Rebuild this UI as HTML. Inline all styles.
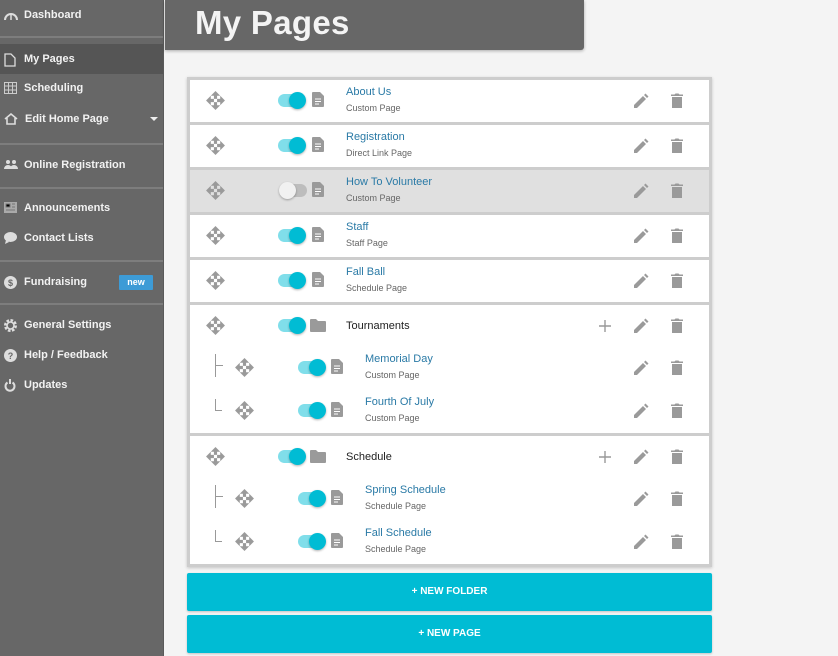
<!DOCTYPE html>
<html><head><meta charset="utf-8">
<style>
*{margin:0;padding:0;box-sizing:border-box}
body{width:838px;height:656px;background:#f4f4f4;font-family:"Liberation Sans",sans-serif;position:relative;overflow:hidden}
#side{position:absolute;left:0;top:0;width:164px;height:656px;background:#676767;border-right:1px solid #5a5a5a}
.si{position:absolute;left:0;width:163px;height:26px;color:#f2f2f2;font-size:11px;font-weight:bold;line-height:26px;padding-left:24px}
.si svg{position:absolute;left:4px;top:7px}
.sep{position:absolute;left:0;width:163px;height:2px;background:#7d7d7d}
#hdr{position:absolute;left:165px;top:0;width:419px;height:50px;background:#676767;border-radius:0 0 3px 0;box-shadow:0 1px 3px rgba(0,0,0,.3)}
#hdr h1{position:absolute;left:30px;top:4px;color:#f4f4f4;font-size:33px;font-weight:bold;letter-spacing:.3px}
#list{position:absolute;left:187px;top:77px;width:525px;height:490px;background:#cdcdcd;box-shadow:0 1px 3px rgba(0,0,0,.2)}
.row{position:absolute;left:3px;width:519px;background:#fff}
.it{position:absolute;height:43px;width:519px;left:0}
.mv{position:absolute;top:10px}
.tg{position:absolute;top:14px;width:26px;height:13px;border-radius:7px;background:#80deea}
.tg::after{content:"";position:absolute;right:-2px;top:-2px;width:17px;height:17px;border-radius:50%;background:#00bcd4;box-shadow:0 1px 2px rgba(0,0,0,.3)}
.tg.off{background:#bdbdbd}
.tg.off::after{right:auto;left:-2px;background:#f1f1f1}
.ic{position:absolute;top:12px}
.t1{position:absolute;top:6px;font-size:11px;color:#2a7aa6}
.t2{position:absolute;top:23px;font-size:9px;color:#666}
.fn{position:absolute;top:15px;font-size:11px;color:#222}
.tr{position:absolute;width:7px;border-left:1.5px solid #999;border-bottom:1.5px solid #999}
.btn{position:absolute;left:187px;width:525px;height:38px;background:#00bcd4;color:#fff;font-size:10px;font-weight:bold;text-align:center;line-height:38px;border-radius:2px;box-shadow:0 1px 2px rgba(0,0,0,.2)}
</style></head><body>
<svg width="0" height="0" style="position:absolute">
<defs>
<symbol id="mv" viewBox="0 0 20 20"><g fill="#9a9a9a"><path d="M10 1l4.5 4.5h-3v3h-3v-3h-3z"/><path d="M10 19l4.5-4.5h-3v-3h-3v3h-3z"/><path d="M1 10l4.5-4.5v3h3v3h-3v3z"/><path d="M19 10l-4.5-4.5v3h-3v3h3v3z"/></g></symbol>
<symbol id="doc" viewBox="0 0 12 15"><path d="M1 0h7l4 4v10a1 1 0 0 1-1 1H1a1 1 0 0 1-1-1V1a1 1 0 0 1 1-1z" fill="#9a9a9a"/><path d="M3 7h6M3 9.5h6M3 12h4" stroke="#fff" stroke-width="1"/></symbol>
<symbol id="fold" viewBox="0 0 16 13"><path d="M0 1a1 1 0 0 1 1-1h5l2 2h7a1 1 0 0 1 1 1v9a1 1 0 0 1-1 1H1a1 1 0 0 1-1-1z" fill="#9a9a9a"/></symbol>
<symbol id="pen" viewBox="0 0 16 16"><path d="M1 12v3h3l9-9-3-3zM11 2l3 3 1.5-1.5-3-3z" fill="#9a9a9a"/></symbol>
<symbol id="trash" viewBox="0 0 12 16"><path d="M1 4h10v11H1zM0 1.5h3.5L4.5 0.5h3l1 1H12v1.5H0z" fill="#9a9a9a"/></symbol>
<symbol id="plus" viewBox="0 0 12 12"><path d="M6 0v12M0 6h12" stroke="#999" stroke-width="1.4"/></symbol>
</defs></svg>

<div id="side">
<div class="si" style="top:2px"><svg width="14" height="12" viewBox="0 0 14 12"><path d="M1 11A6 6 0 0 1 13 11" fill="none" stroke="#ddd" stroke-width="2"/><path d="M7 11V6" stroke="#ddd" stroke-width="1.5"/></svg>Dashboard</div>
<div class="sep" style="top:36px"></div>
<div style="position:absolute;top:44px;left:0;width:163px;height:30px;background:#555"></div>
<div class="si" style="top:46px"><svg width="12" height="14" viewBox="0 0 12 14"><path d="M1 1h6l4 4v8H1z" fill="none" stroke="#ddd" stroke-width="1.3"/></svg>My Pages</div>
<div class="si" style="top:75px"><svg width="13" height="12" viewBox="0 0 13 12"><rect x="0.5" y="0.5" width="12" height="11" fill="none" stroke="#ccc"/><path d="M0 4h13M0 8h13M4.5 0v12M8.5 0v12" stroke="#ccc"/></svg>Scheduling</div>
<div class="si" style="top:106px;padding-left:25px"><svg width="14" height="12" viewBox="0 0 14 12"><path d="M1 6L7 1l6 5M3 5v6h8V5" fill="none" stroke="#ddd" stroke-width="1.6"/></svg>Edit Home Page<span style="position:absolute;left:150px;top:11px;border:4px solid transparent;border-top:4px solid #eee"></span></div>
<div class="sep" style="top:143px"></div>
<div class="si" style="top:152px"><svg width="14" height="10" viewBox="0 0 14 10"><circle cx="4" cy="3" r="2" fill="#ddd"/><circle cx="10" cy="3" r="2" fill="#ddd"/><path d="M0 10a4 4 0 0 1 8 0zM6 10a4 4 0 0 1 8 0z" fill="#ddd"/></svg>Online Registration</div>
<div class="sep" style="top:187px"></div>
<div class="si" style="top:195px"><svg width="13" height="11" viewBox="0 0 13 11"><rect width="13" height="11" fill="#aaa"/><path d="M2 2h4v3H2zM8 2h3M8 5h3M2 8h9" stroke="#777" stroke-width="1"/></svg>Announcements</div>
<div class="si" style="top:225px"><svg width="13" height="12" viewBox="0 0 13 12"><ellipse cx="6.5" cy="5" rx="6.5" ry="5" fill="#ddd"/><path d="M2 8l-1 4 4-2z" fill="#ddd"/></svg>Contact Lists</div>
<div class="sep" style="top:260px"></div>
<div class="si" style="top:269px"><svg width="13" height="13" viewBox="0 0 13 13"><circle cx="6.5" cy="6.5" r="6.5" fill="#ddd"/><text x="6.5" y="10" font-size="9" font-weight="bold" text-anchor="middle" fill="#676767" font-family="Liberation Sans">$</text></svg>Fundraising<span style="position:absolute;left:119px;top:6px;width:34px;height:15px;background:#3d9bd6;color:#fff;font-size:9px;line-height:15px;text-align:center;border-radius:1px">new</span></div>
<div class="sep" style="top:303px"></div>
<div class="si" style="top:312px"><svg width="13" height="13" viewBox="0 0 13 13"><circle cx="6.5" cy="6.5" r="5" fill="none" stroke="#ddd" stroke-width="3" stroke-dasharray="2.5 1.4"/><circle cx="6.5" cy="6.5" r="3.5" fill="none" stroke="#ddd" stroke-width="1.6"/></svg>General Settings</div>
<div class="si" style="top:342px"><svg width="13" height="13" viewBox="0 0 13 13"><circle cx="6.5" cy="6.5" r="6.5" fill="#ddd"/><text x="6.5" y="10" font-size="9" font-weight="bold" text-anchor="middle" fill="#676767" font-family="Liberation Sans">?</text></svg>Help / Feedback</div>
<div class="si" style="top:372px"><svg width="12" height="13" viewBox="0 0 12 13"><path d="M3.5 3.5a4.5 4.5 0 1 0 5 0" fill="none" stroke="#ddd" stroke-width="2"/><path d="M6 0v5" stroke="#ddd" stroke-width="2"/></svg>Updates</div>
</div>

<div id="hdr"><h1>My Pages</h1></div>

<div id="list">
<div class="row" style="top:3px;height:42px"><div class="it">
<svg class="mv" style="left:15px" width="21" height="21"><use href="#mv"/></svg><div class="tg" style="left:88px"></div><svg class="ic" style="left:122px" width="12" height="15"><use href="#doc"/></svg>
<div class="t1" style="left:156px">About Us</div><div class="t2" style="left:156px">Custom Page</div>
<svg style="position:absolute;left:443px;top:13px" width="16" height="16"><use href="#pen"/></svg><svg style="position:absolute;left:481px;top:13px" width="12" height="16"><use href="#trash"/></svg></div></div>
<div class="row" style="top:48px;height:42px"><div class="it">
<svg class="mv" style="left:15px" width="21" height="21"><use href="#mv"/></svg><div class="tg" style="left:88px"></div><svg class="ic" style="left:122px" width="12" height="15"><use href="#doc"/></svg>
<div class="t1" style="left:156px">Registration</div><div class="t2" style="left:156px">Direct Link Page</div>
<svg style="position:absolute;left:443px;top:13px" width="16" height="16"><use href="#pen"/></svg><svg style="position:absolute;left:481px;top:13px" width="12" height="16"><use href="#trash"/></svg></div></div>
<div class="row" style="top:93px;height:42px;background:#e0e0e0"><div class="it">
<svg class="mv" style="left:15px" width="21" height="21"><use href="#mv"/></svg><div class="tg off" style="left:91px"></div><svg class="ic" style="left:122px" width="12" height="15"><use href="#doc"/></svg>
<div class="t1" style="left:156px">How To Volunteer</div><div class="t2" style="left:156px">Custom Page</div>
<svg style="position:absolute;left:443px;top:13px" width="16" height="16"><use href="#pen"/></svg><svg style="position:absolute;left:481px;top:13px" width="12" height="16"><use href="#trash"/></svg></div></div>
<div class="row" style="top:138px;height:42px"><div class="it">
<svg class="mv" style="left:15px" width="21" height="21"><use href="#mv"/></svg><div class="tg" style="left:88px"></div><svg class="ic" style="left:122px" width="12" height="15"><use href="#doc"/></svg>
<div class="t1" style="left:156px">Staff</div><div class="t2" style="left:156px">Staff Page</div>
<svg style="position:absolute;left:443px;top:13px" width="16" height="16"><use href="#pen"/></svg><svg style="position:absolute;left:481px;top:13px" width="12" height="16"><use href="#trash"/></svg></div></div>
<div class="row" style="top:183px;height:42px"><div class="it">
<svg class="mv" style="left:15px" width="21" height="21"><use href="#mv"/></svg><div class="tg" style="left:88px"></div><svg class="ic" style="left:122px" width="12" height="15"><use href="#doc"/></svg>
<div class="t1" style="left:156px">Fall Ball</div><div class="t2" style="left:156px">Schedule Page</div>
<svg style="position:absolute;left:443px;top:13px" width="16" height="16"><use href="#pen"/></svg><svg style="position:absolute;left:481px;top:13px" width="12" height="16"><use href="#trash"/></svg></div></div>
<div class="row" style="top:228px;height:128px">
<div class="it" style="top:0">
<svg class="mv" style="left:15px" width="21" height="21"><use href="#mv"/></svg><div class="tg" style="left:88px"></div><svg class="ic" style="left:120px;top:14px" width="16" height="13"><use href="#fold"/></svg>
<div class="fn" style="left:156px">Tournaments</div>
<svg style="position:absolute;left:409px;top:15px" width="12" height="12"><use href="#plus"/></svg>
<svg style="position:absolute;left:443px;top:13px" width="16" height="16"><use href="#pen"/></svg><svg style="position:absolute;left:481px;top:13px" width="12" height="16"><use href="#trash"/></svg></div>
<div class="it" style="top:42px">
<div class="tr" style="left:25px;top:7px;height:23px;border-bottom:none"></div><div style="position:absolute;left:26px;top:18px;width:7px;border-top:1.5px solid #999"></div>
<svg class="mv" style="left:44px" width="21" height="21"><use href="#mv"/></svg><div class="tg" style="left:108px"></div><svg class="ic" style="left:141px" width="12" height="15"><use href="#doc"/></svg>
<div class="t1" style="left:175px">Memorial Day</div><div class="t2" style="left:175px">Custom Page</div>
<svg style="position:absolute;left:443px;top:13px" width="16" height="16"><use href="#pen"/></svg><svg style="position:absolute;left:481px;top:13px" width="12" height="16"><use href="#trash"/></svg></div>
<div class="it" style="top:85px">
<div class="tr" style="left:25px;top:9px;height:12px"></div>
<svg class="mv" style="left:44px" width="21" height="21"><use href="#mv"/></svg><div class="tg" style="left:108px"></div><svg class="ic" style="left:141px" width="12" height="15"><use href="#doc"/></svg>
<div class="t1" style="left:175px">Fourth Of July</div><div class="t2" style="left:175px">Custom Page</div>
<svg style="position:absolute;left:443px;top:13px" width="16" height="16"><use href="#pen"/></svg><svg style="position:absolute;left:481px;top:13px" width="12" height="16"><use href="#trash"/></svg></div>
</div>
<div class="row" style="top:359px;height:128px">
<div class="it" style="top:0">
<svg class="mv" style="left:15px" width="21" height="21"><use href="#mv"/></svg><div class="tg" style="left:88px"></div><svg class="ic" style="left:120px;top:14px" width="16" height="13"><use href="#fold"/></svg>
<div class="fn" style="left:156px">Schedule</div>
<svg style="position:absolute;left:409px;top:15px" width="12" height="12"><use href="#plus"/></svg>
<svg style="position:absolute;left:443px;top:13px" width="16" height="16"><use href="#pen"/></svg><svg style="position:absolute;left:481px;top:13px" width="12" height="16"><use href="#trash"/></svg></div>
<div class="it" style="top:42px">
<div class="tr" style="left:25px;top:7px;height:23px;border-bottom:none"></div><div style="position:absolute;left:26px;top:18px;width:7px;border-top:1.5px solid #999"></div>
<svg class="mv" style="left:44px" width="21" height="21"><use href="#mv"/></svg><div class="tg" style="left:108px"></div><svg class="ic" style="left:141px" width="12" height="15"><use href="#doc"/></svg>
<div class="t1" style="left:175px">Spring Schedule</div><div class="t2" style="left:175px">Schedule Page</div>
<svg style="position:absolute;left:443px;top:13px" width="16" height="16"><use href="#pen"/></svg><svg style="position:absolute;left:481px;top:13px" width="12" height="16"><use href="#trash"/></svg></div>
<div class="it" style="top:85px">
<div class="tr" style="left:25px;top:9px;height:12px"></div>
<svg class="mv" style="left:44px" width="21" height="21"><use href="#mv"/></svg><div class="tg" style="left:108px"></div><svg class="ic" style="left:141px" width="12" height="15"><use href="#doc"/></svg>
<div class="t1" style="left:175px">Fall Schedule</div><div class="t2" style="left:175px">Schedule Page</div>
<svg style="position:absolute;left:443px;top:13px" width="16" height="16"><use href="#pen"/></svg><svg style="position:absolute;left:481px;top:13px" width="12" height="16"><use href="#trash"/></svg></div>
</div>
</div>

<div class="btn" style="top:573px">+ NEW FOLDER</div>
<div class="btn" style="top:615px">+ NEW PAGE</div>
</body></html>
